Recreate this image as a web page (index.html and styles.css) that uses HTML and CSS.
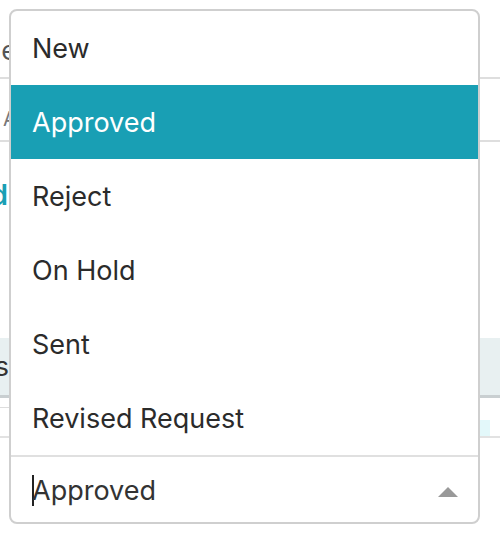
FILE: index.html
```html
<!DOCTYPE html>
<html lang="en">
<head>
    <meta charset="UTF-8">
    <meta name="viewport" content="width=device-width, initial-scale=1.0">
    <title>Status Select</title>
    <link rel="stylesheet" href="styles.css">
</head>
<body>
    <div class="page">
        <div class="row row-head"><div class="cut cut-head"><span class="cell-text">Name</span></div></div>
        <div class="row row-value"><span class="cell-text small">A</span></div>
        <div class="row row-link"><div class="cut cut-link"><span class="link-text">Approved</span></div></div>
        <div class="row row-band"><div class="cut cut-band"><span class="cell-text dark">Status</span></div></div>
        <div class="row row-foot">
            <span class="foot-line"></span>
            <span class="foot-box"></span>
        </div>
    </div>

    <div class="select">
        <ul class="options">
            <li class="option">New</li>
            <li class="option selected">Approved</li>
            <li class="option">Reject</li>
            <li class="option">On Hold</li>
            <li class="option">Sent</li>
            <li class="option">Revised Request</li>
        </ul>
        <div class="select-input">
            <span class="caret"></span>
            <span class="select-value">Approved</span>
            <span class="arrow"></span>
        </div>
    </div>
</body>
</html>
```

FILE: styles.css
```css
body {
    font-family: Inter, "Liberation Sans", Arial, sans-serif;
    margin: 0;
    background: #fff;
    color: #333;
    overflow: hidden;
}
.page {
    width: 500px;
    height: 535px;
}
.row {
    box-sizing: border-box;
    border-bottom: 2px solid #dedede;
    overflow: hidden;
    white-space: nowrap;
}
.cut {
    display: flex;
    justify-content: flex-end;
}
.cut-head {
    width: 17px;
}
.cut-link {
    width: 8px;
}
.cut-band {
    width: 9px;
}
.row-head {
    height: 79px;
    padding-top: 34px;
}
.row-value {
    height: 63px;
    padding-top: 28px;
}
.row-link {
    height: 196px;
    padding-top: 36px;
    border-bottom: none;
}
.row-band {
    height: 60px;
    background: #e8f0f1;
    border-bottom: 3px solid #c9cfd1;
    padding-top: 12px;
}
.row-foot {
    position: relative;
    height: 40px;
    border-bottom: 2px solid #e2e2e2;
}
.cell-text {
    font-size: 27px;
    color: #555;
}
.cell-text.small {
    display: inline-block;
    margin-left: 3px;
    font-size: 20px;
    color: #777;
}
.cell-text.dark {
    color: #333;
}
.link-text {
    font-size: 28px;
    font-weight: 600;
    color: #1a9fb4;
}
.foot-line {
    display: block;
    width: 12px;
    margin-top: 9px;
    border-top: 1px solid #ddd;
}
.foot-box {
    position: absolute;
    right: 10px;
    bottom: 0;
    width: 10px;
    height: 16px;
    background: #e3f8fa;
}

/* dropdown overlay */
.select {
    position: absolute;
    left: 9px;
    top: 9px;
    width: 471px;
    box-sizing: border-box;
    border: 2px solid #cfcfcf;
    border-radius: 8px;
    background: #fff;
    overflow: hidden;
}
.options {
    list-style: none;
    margin: 0;
    padding: 0;
}
.option {
    height: 74px;
    line-height: 75px;
    padding-left: 21px;
    font-size: 27px;
    color: #2b2b2b;
}
.option.selected {
    background: #199fb4;
    color: #fff;
}
.select-input {
    position: relative;
    display: flex;
    align-items: center;
    height: 67px;
    padding-top: 2px;
    box-sizing: border-box;
    padding-left: 21px;
    border-top: 2px solid #e0e0e0;
    font-size: 27px;
    color: #333;
}
.caret {
    width: 2px;
    height: 31px;
    background: #222;
    margin-right: -2px;
}
.arrow {
    position: absolute;
    right: 20px;
    top: 30px;
    width: 0;
    height: 0;
    border-left: 10px solid transparent;
    border-right: 10px solid transparent;
    border-bottom: 10px solid #999;
}
```
